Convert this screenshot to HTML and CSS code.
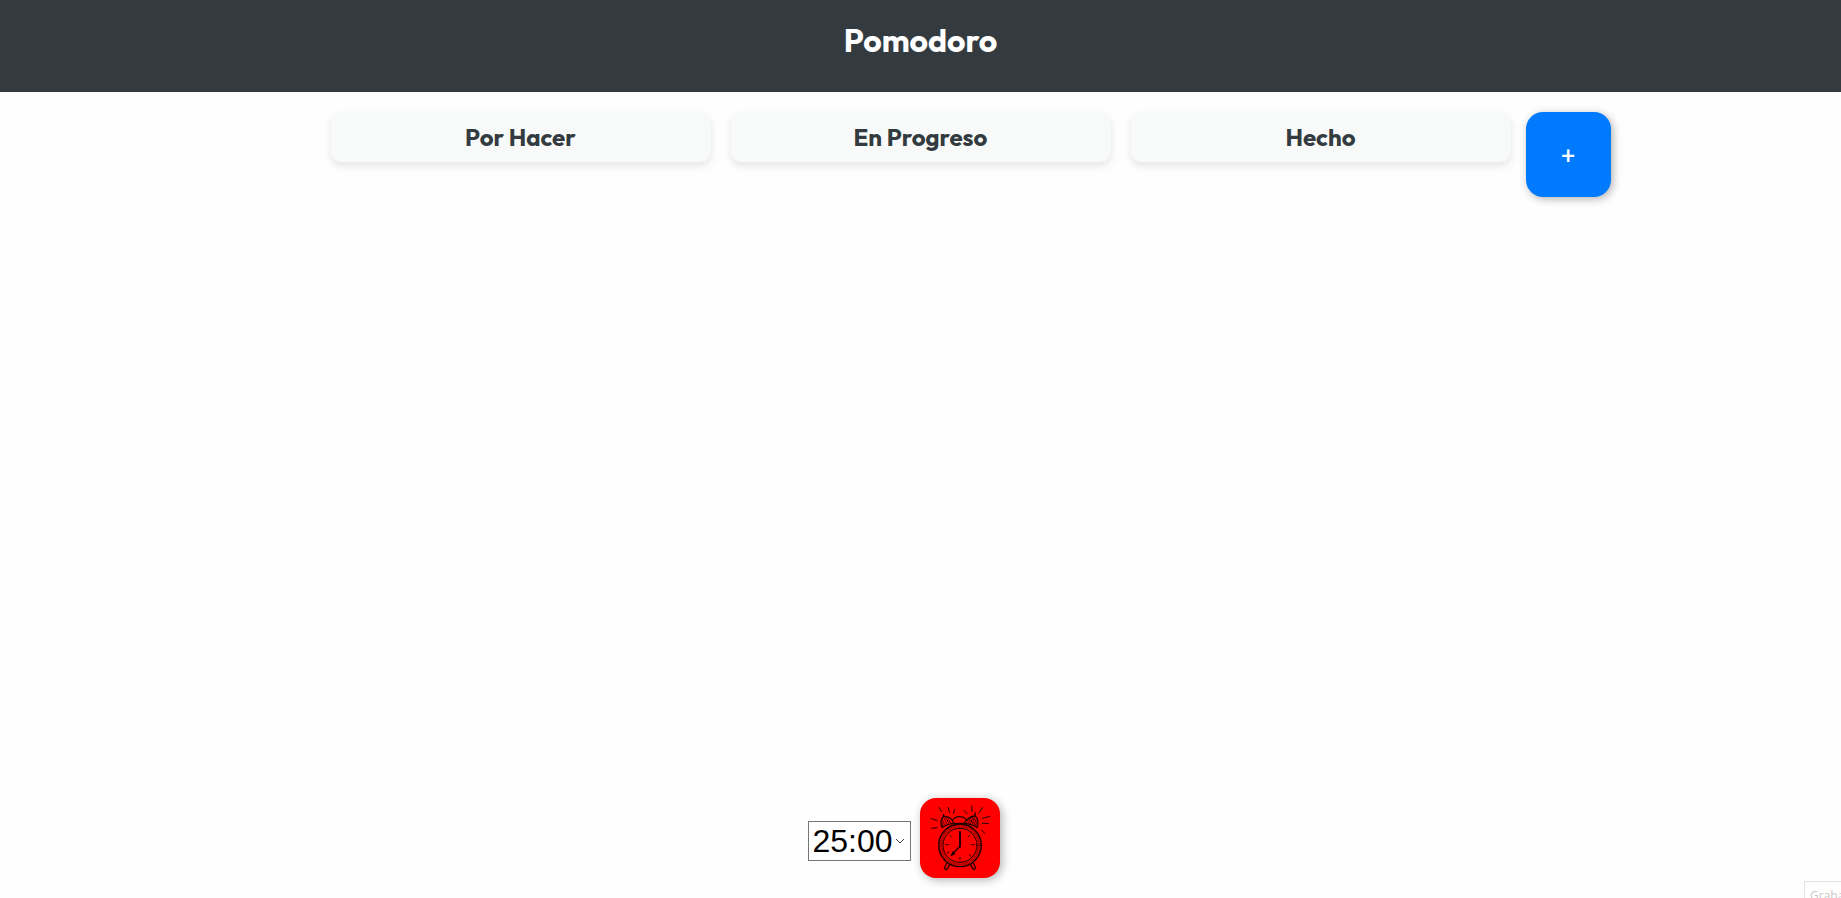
FILE: index.html
```html
<!DOCTYPE html>
<html lang="es">
<head>
<meta charset="utf-8">
<meta name="viewport" content="width=device-width, initial-scale=1">
<title>Pomodoro</title>
<link rel="stylesheet" href="styles.css">
</head>
<body>
<header class="site-header">
  <h1 class="site-title">Pomodoro</h1>
</header>
<main class="board">
  <div class="columns">
    <section class="column"><h2 class="column-title">Por Hacer</h2></section>
    <section class="column"><h2 class="column-title">En Progreso</h2></section>
    <section class="column"><h2 class="column-title">Hecho</h2></section>
  </div>
  <button class="add-button" type="button" aria-label="Agregar tarea">+</button>
</main>
<footer class="timer">
  <div class="timer-field">
    <select class="timer-select" aria-label="Tiempo">
      <option>25:00</option>
      <option>15:00</option>
      <option>05:00</option>
    </select>
    <svg class="chevron" viewBox="0 0 10 6" aria-hidden="true"><path d="M1 1l4 4 4-4"/></svg>
  </div>
  <button class="timer-button" type="button" aria-label="Iniciar">
    <svg class="clock" viewBox="0 0 240 240" aria-hidden="true">
      <g class="rays">
        <path d="M57 28l8 13M85 28l3 15M104 34l-4 12M34 62l18 6M35 91l17-2M133 38l8 9M155 24l1 16M187 29l-10 16M187 61l23-6M187 76h19M185 96l9 10"/>
      </g>
      <path class="line" d="M66 89C60 73 63 59 72 55C86 54 99 64 101 76C88 77 76 81 66 89zM172 89C176 75 174 60 166 54C152 53 138 64 133 76C148 77 160 81 172 89z"/>
      <path class="line" d="M70 55l1-6M164 53l2-8M98 66C106 53 130 52 138 65M101 76h32"/>
      <path class="hatch" d="M66 62l8 20M71 57l10 22M77 57l10 20M65 72l5 13M83 59l9 17M147 60l-8 15M153 57l-8 19M159 55l-8 22M164 56l-8 23M169 62l-7 20M172 70l-5 15M145 62l22 18M152 56l20 16"/>
      <circle class="line" cx="120" cy="142" r="64"/>
      <circle class="line thin" cx="120" cy="142" r="51"/>
      <circle class="rim" cx="120" cy="142" r="58"/>
      <path class="hand" d="M120 101v45"/>
      <path class="line" d="M120 145l-26 26M100 161l-6 11 10-5"/>
      <path class="line thin" d="M120 178v7M77 140h8M155 140h8M90 112l5 5M149 112l-5 5M148 170l4 5M87 162l-5 3"/>
      <path class="line" d="M80 195l-6 14c-2 6 7 8 9 2l6-12M152 200l6 12c4 5 10 1 8-4l-6-13"/>
    </svg>
  </button>
</footer>
<div class="hint">Graba</div>
</body>
</html>
```
FILE: styles.css
```css
* {
  box-sizing: border-box;
}

body {
  margin: 0;
  min-height: 100vh;
  display: flex;
  flex-direction: column;
  overflow: hidden;
  background: #fefefe;
  color: #333b40;
  font-family: Outfit, Lato, sans-serif;
}

.site-header {
  padding: 20px 20px 32px;
  background: #333b40;
  color: #fff;
  text-align: center;
}

.site-title {
  margin: 0;
  font-size: 32px;
  font-weight: 700;
  line-height: 40px;
}

.board {
  flex: 1;
  display: grid;
  grid-template-columns: 1fr minmax(0, 1180px) 1fr;
  align-items: start;
  padding-top: 20px;
}

.columns {
  grid-column: 2;
  display: grid;
  grid-template-columns: repeat(3, 1fr);
  gap: 20px;
}

.column {
  padding: 10px;
  border-radius: 10px;
  background: #f8faf9;
  box-shadow: 0 4px 8px rgba(0, 0, 0, 0.1);
}

.column-title {
  margin: 0;
  font-size: 24px;
  font-weight: 700;
  line-height: 30px;
  text-align: center;
}

.add-button {
  grid-column: 3;
  width: 85px;
  height: 85px;
  margin-left: 15px;
  padding: 0;
  border: 0;
  border-radius: 17px;
  background: #007bff;
  box-shadow: 2px 2px 8px rgba(0, 0, 0, 0.3);
  color: #fff;
  font: 400 28px Outfit, Lato, sans-serif;
}

.timer {
  display: flex;
  justify-content: center;
  align-items: center;
  gap: 9px;
  padding: 0 34px 20px 0;
}

.timer-field {
  display: grid;
  grid-template-columns: 1fr 16px;
  align-items: center;
  padding-top: 6px;
}

.timer-select {
  grid-area: 1 / 1 / 2 / 3;
  width: 103px;
  height: 40px;
  padding: 0 0 0 4px;
  border: 1px solid #767676;
  border-radius: 0;
  appearance: none;
  background: #fff;
  color: #000;
  font: 32px "Liberation Sans", Arial, sans-serif;
}

.chevron {
  grid-area: 1 / 2;
  z-index: 1;
  width: 10px;
  height: 6px;
  fill: none;
  stroke: #444;
  pointer-events: none;
}

.timer-button {
  width: 80px;
  height: 80px;
  padding: 0;
  border: 0;
  border-radius: 16px;
  background: #f00;
  box-shadow: 2px 2px 10px rgba(0, 0, 0, 0.3);
}

.clock {
  display: block;
  width: 100%;
  fill: none;
  stroke: #200;
  stroke-linecap: round;
  stroke-linejoin: round;
}

.rays {
  stroke-width: 3;
}

.line {
  stroke-width: 4;
}

.thin {
  stroke-width: 3;
}

.hatch {
  stroke-width: 2;
}

.rim {
  stroke-width: 10;
  stroke-linecap: butt;
  stroke-dasharray: 2 3;
  opacity: 0.7;
}

.hand {
  stroke-width: 6;
}

.hint {
  position: fixed;
  right: 0;
  bottom: 0;
  width: 37px;
  height: 17px;
  padding: 6px 0 0 5px;
  overflow: hidden;
  border: 1px solid #e4e4e4;
  border-width: 1px 0 0 1px;
  background: #fff;
  color: #c8c8c8;
  font: 12px/16px "Open Sans", sans-serif;
}
```
